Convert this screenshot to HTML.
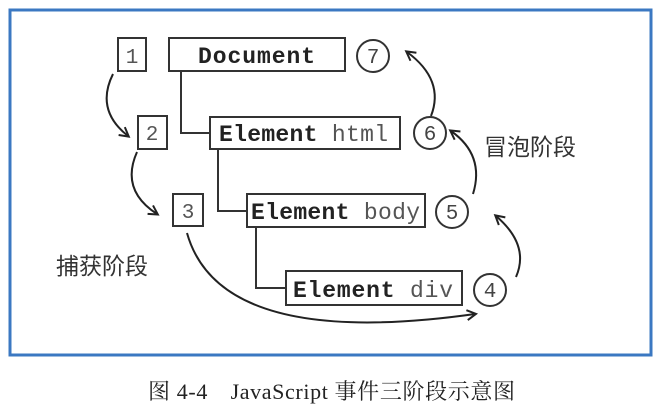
<!DOCTYPE html>
<html><head><meta charset="utf-8"><style>
body{margin:0;background:#fff;width:661px;height:409px;overflow:hidden}
</style></head><body>
<svg width="661" height="409" xmlns="http://www.w3.org/2000/svg">
<defs><marker id="a" markerWidth="12" markerHeight="12" refX="9" refY="6" orient="auto" markerUnits="userSpaceOnUse"><path d="M1,1 L10,6 L1,11" fill="none" stroke="#222" stroke-width="2"/></marker></defs>
<rect x="10" y="10" width="641" height="345" fill="none" stroke="#3b78c2" stroke-width="3"/>
<g fill="#fff" stroke="#333" stroke-width="2">
<rect x="118" y="38" width="28" height="33"/>
<rect x="169" y="38" width="176" height="33"/>
<rect x="138" y="116" width="29" height="33"/>
<rect x="210" y="117" width="190" height="32"/>
<rect x="173" y="194" width="30" height="32"/>
<rect x="247" y="194" width="178" height="33"/>
<rect x="286" y="271" width="176" height="34"/>
<circle cx="373" cy="56" r="16"/>
<circle cx="430" cy="133" r="16"/>
<circle cx="452" cy="212" r="16"/>
<circle cx="490" cy="290" r="16"/>
</g>
<g fill="none" stroke="#333" stroke-width="2">
<path d="M181,71 V133 H210"/>
<path d="M218,149 V211 H247"/>
<path d="M256,227 V288 H286"/>
</g>
<g fill="none" stroke="#222" stroke-width="2">
<path d="M113,74 Q95,110 128,136" marker-end="url(#a)"/>
<path d="M137,152 Q120,190 157,214" marker-end="url(#a)"/>
<path d="M187,233 Q220,350 475,314" marker-end="url(#a)"/>
<path d="M516,277 Q530,245 496,216" marker-end="url(#a)"/>
<path d="M473,194 Q485,155 451,131" marker-end="url(#a)"/>
<path d="M431,116 Q445,80 407,52" marker-end="url(#a)"/>
</g>
<g font-family="Liberation Mono,monospace" font-size="23" fill="#222">
<text x="132" y="63" fill="#555" font-size="21" text-anchor="middle">1</text>
<text x="152" y="140" fill="#555" font-size="21" text-anchor="middle">2</text>
<text x="188" y="218" fill="#555" font-size="21" text-anchor="middle">3</text>
<text x="198" y="63" font-weight="bold" textLength="117">Document</text>
<text x="219" y="141" textLength="169"><tspan font-weight="bold">Element</tspan> <tspan fill="#555">html</tspan></text>
<text x="251" y="219" textLength="169"><tspan font-weight="bold">Element</tspan> <tspan fill="#555">body</tspan></text>
<text x="293" y="297" textLength="160"><tspan font-weight="bold">Element</tspan> <tspan fill="#555">div</tspan></text>
<g fill="#444" font-size="21" text-anchor="middle">
<text x="373" y="63">7</text><text x="430" y="140">6</text><text x="452" y="219">5</text><text x="490" y="297">4</text>
</g>
</g>
<g font-family="Liberation Sans,'Noto Sans CJK SC',sans-serif" font-size="23" fill="#333">
<text x="484" y="155">冒泡阶段</text>
<text x="56" y="274">捕获阶段</text>
</g>
<text x="148" y="399" textLength="367" font-family="Liberation Serif,'Noto Serif CJK SC',serif" font-size="22" fill="#222">图 4-4　JavaScript 事件三阶段示意图</text>
</svg>
</body></html>
